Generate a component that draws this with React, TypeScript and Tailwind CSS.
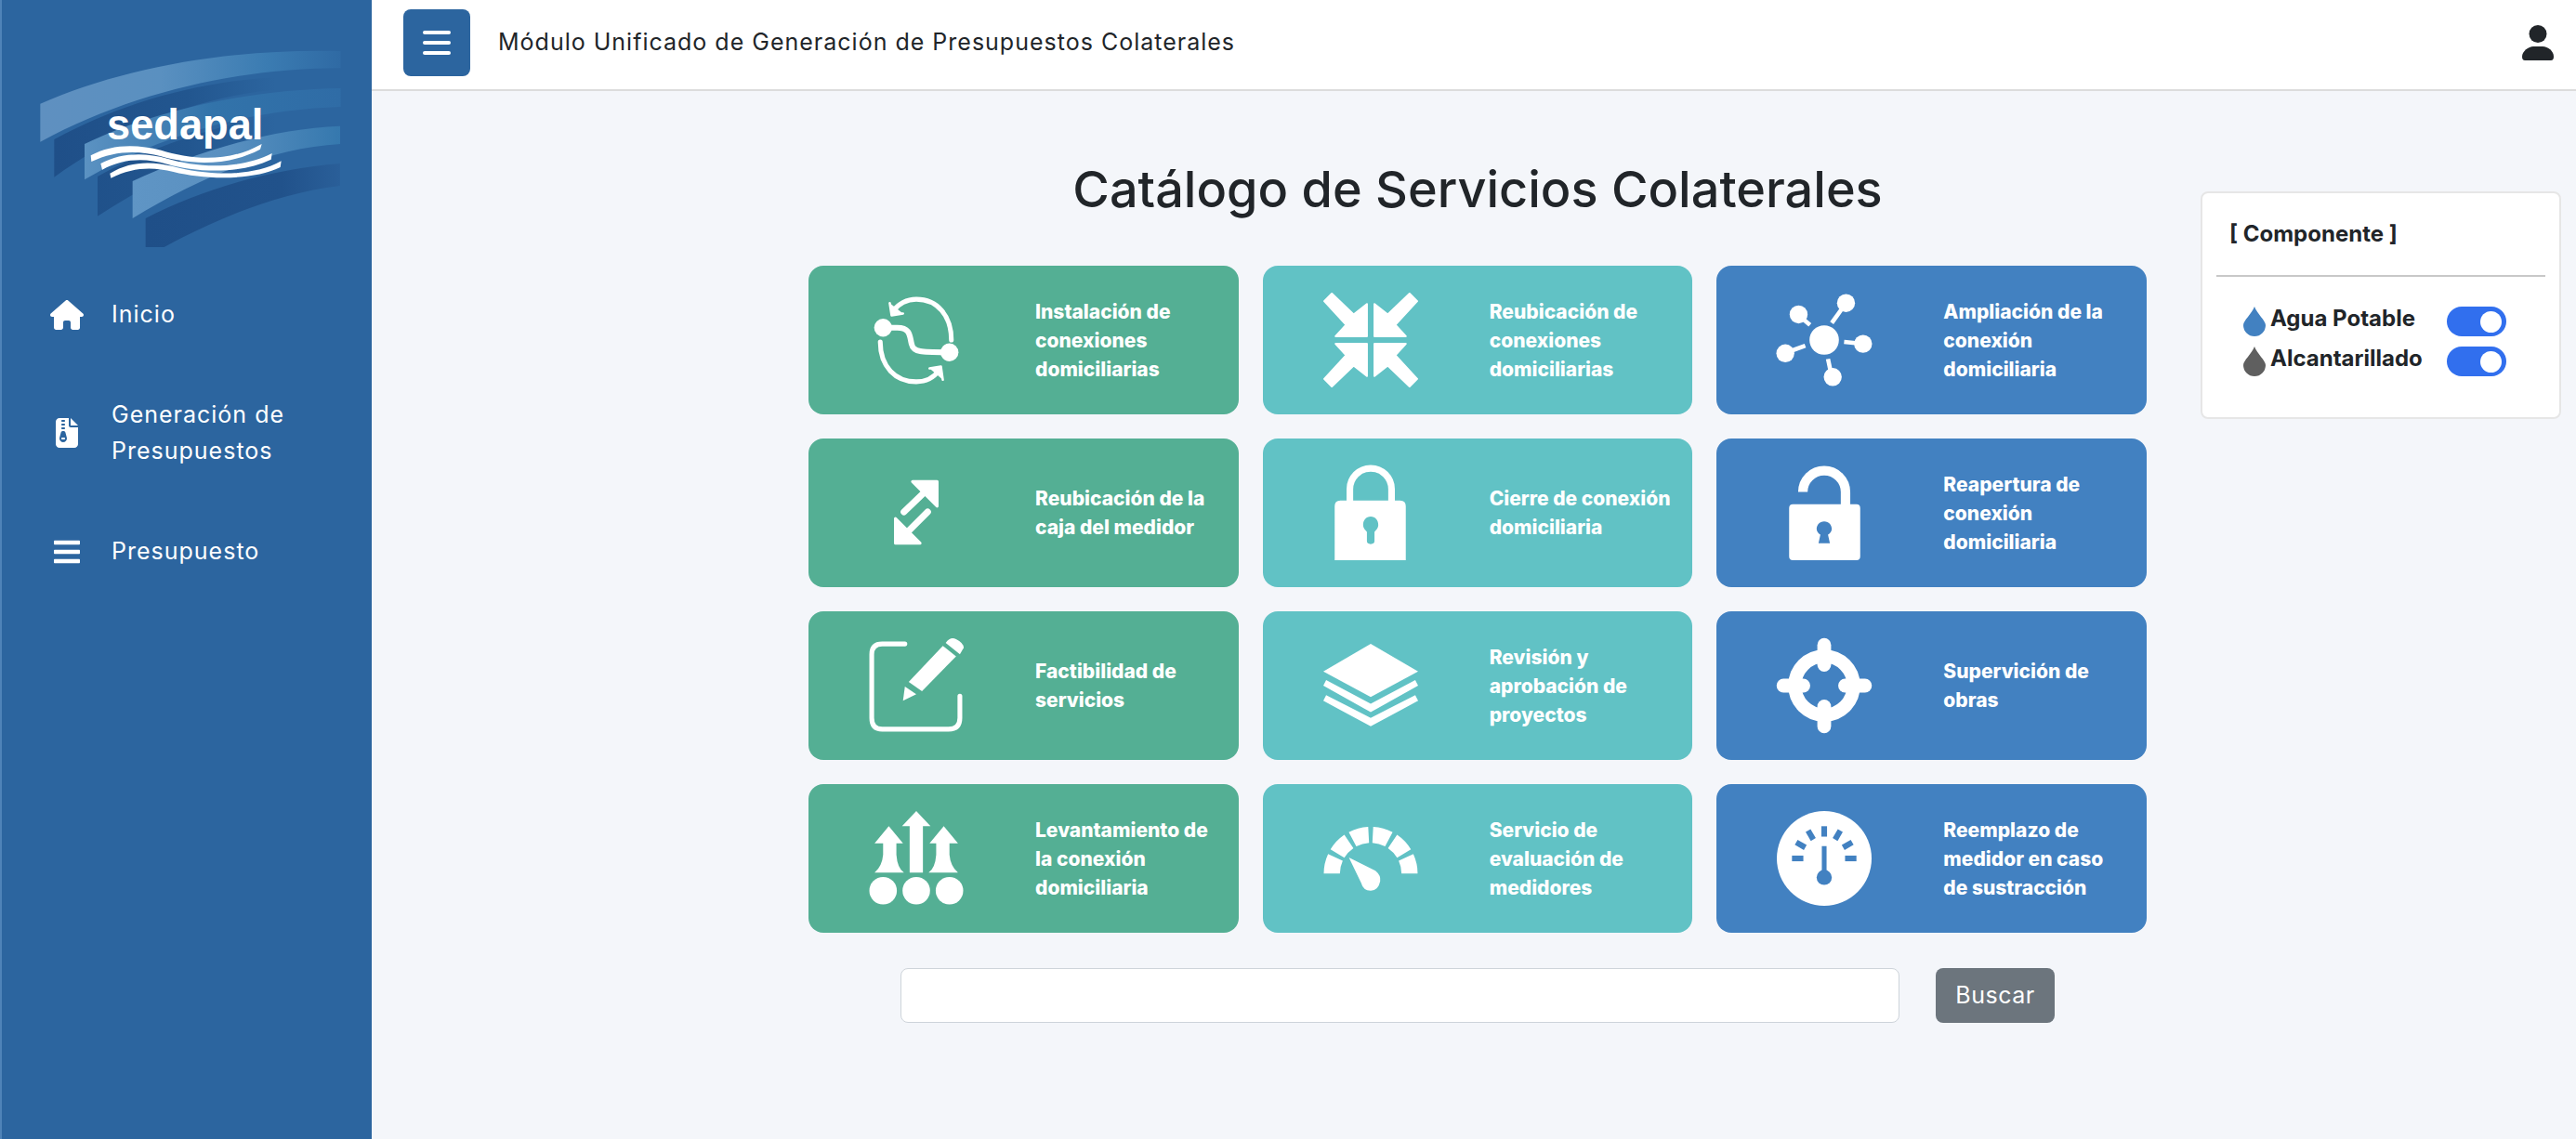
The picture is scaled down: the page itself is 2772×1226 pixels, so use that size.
import { FaBars } from "react-icons/fa";
import { FaFileZipper, FaHouse } from "react-icons/fa6";

const GREEN = "bg-[#54af94]";
const TEAL = "bg-[#61c2c5]";
const BLUE = "bg-[#4281c1]";

function Logo() {
  return (
    <svg viewBox="0 0 1050 705" className="ml-[28px] mt-[40px] block h-[235px] w-[350px]">
      <defs>
        <linearGradient id="lightBand" x1="40" y1="0" x2="1010" y2="0" gradientUnits="userSpaceOnUse">
          <stop offset="0" stopColor="#5f90c0" />
          <stop offset="0.4" stopColor="#5a90c0" />
          <stop offset="0.75" stopColor="#3b7cb2" />
          <stop offset="1" stopColor="#2f6aa4" />
        </linearGradient>
        <linearGradient id="lightBand2" x1="183" y1="0" x2="1010" y2="0" gradientUnits="userSpaceOnUse">
          <stop offset="0" stopColor="#5b92c2" />
          <stop offset="0.5" stopColor="#3273aa" />
          <stop offset="1" stopColor="#2f6ca6" />
        </linearGradient>
        <linearGradient id="lightBand3" x1="338" y1="0" x2="1010" y2="0" gradientUnits="userSpaceOnUse">
          <stop offset="0" stopColor="#5f95c5" />
          <stop offset="0.45" stopColor="#5a90c0" />
          <stop offset="1" stopColor="#3578ae" />
        </linearGradient>
        <linearGradient id="darkBand" x1="85" y1="0" x2="800" y2="0" gradientUnits="userSpaceOnUse">
          <stop offset="0" stopColor="#1f4f88" />
          <stop offset="0.6" stopColor="#22568f" />
          <stop offset="1" stopColor="#2c659f" />
        </linearGradient>
        <linearGradient id="darkBand2" x1="380" y1="0" x2="1010" y2="0" gradientUnits="userSpaceOnUse">
          <stop offset="0" stopColor="#1f4f88" />
          <stop offset="0.7" stopColor="#21528b" />
          <stop offset="1" stopColor="#2a5f99" />
        </linearGradient>
      </defs>
      <path d="M85 330 C300 215 560 130 900 125 L900 165 C560 170 300 300 85 452 Z" fill="url(#darkBand)" />
      <path d="M225 450 C420 340 700 250 1000 225 L1000 285 C700 300 440 440 225 578 Z" fill="url(#darkBand)" />
      <path d="M380 585 C560 490 790 425 1008 408 L1008 480 C800 505 600 590 440 678 L380 678 Z" fill="url(#darkBand2)" />
      <path d="M40 215 C300 100 650 35 1010 45 L1010 100 C700 100 350 170 40 338 Z" fill="url(#lightBand)" />
      <path d="M183 345 C400 240 700 170 1010 165 L1010 225 C700 235 420 320 183 460 Z" fill="url(#lightBand2)" />
      <path d="M338 465 C540 370 790 295 1008 287 L1008 345 C780 360 560 450 338 585 Z" fill="url(#lightBand3)" />
      <text x="255" y="330" fontFamily="'Liberation Sans', sans-serif" fontWeight="700" fontSize="136" fill="#fff" textLength="505" lengthAdjust="spacingAndGlyphs">
        sedapal
      </text>
      <g fill="#fff">
        <path d="M203 382 C270 345 350 345 430 365 C520 392 640 410 755 345 L750 362 C640 420 520 410 430 385 C360 365 280 365 205 402 Z" />
        <path d="M235 408 C300 372 380 372 450 392 C540 420 680 430 788 375 L785 395 C680 445 540 435 450 410 C380 390 310 390 240 428 Z" />
        <path d="M265 440 C330 400 400 400 470 418 C570 445 720 455 818 400 L815 420 C720 465 570 460 470 435 C400 418 340 420 268 455 Z" />
      </g>
    </svg>
  );
}

function Icon({ children }: { children: React.ReactNode }) {
  return (
    <svg viewBox="0 0 100 100" className="h-[102px] w-[102px] shrink-0 overflow-visible" fill="#fff">
      {children}
    </svg>
  );
}

const icons: Record<string, React.ReactNode> = {
  sync: (
    <g fill="none" stroke="#fff" strokeWidth="5" strokeLinecap="round">
      <path d="M87 50 C87 24 72 7 50 7 C40 7 31 12 26 19" />
      <path d="M22 11 L24 24 L36 22" fill="#fff" strokeWidth="2.5" strokeLinejoin="round" />
      <path d="M12 52 C12 78 28 94 50 94 C61 94 69 89 74 82" />
      <path d="M78 92 L76 78 L64 80" fill="#fff" strokeWidth="2.5" strokeLinejoin="round" />
      <path d="M15 37 H30 C44 37 43 46 45 54 C47 63 54 63 85 63" strokeWidth="6" />
      <circle cx="15" cy="37" r="9.5" fill="#fff" stroke="none" />
      <circle cx="85" cy="63" r="9.5" fill="#fff" stroke="none" />
    </g>
  ),
  compress: (
    <g strokeLinejoin="round" stroke="#fff" strokeWidth="2">
      <polygon id="arrowTL" points="1,9 9,1 32,23 46,12 46,46 13,46 24,34" />
      <use href="#arrowTL" transform="matrix(-1 0 0 1 100 0)" />
      <use href="#arrowTL" transform="matrix(1 0 0 -1 0 100)" />
      <use href="#arrowTL" transform="matrix(-1 0 0 -1 100 100)" />
    </g>
  ),
  network: (
    <g stroke="#fff">
      <g strokeWidth="4.5">
        <line x1="58" y1="32" x2="73" y2="11" />
        <line x1="35" y1="34" x2="22" y2="23" />
        <line x1="30" y1="56" x2="8" y2="64" />
        <line x1="71" y1="52" x2="90" y2="54" />
        <line x1="54" y1="70" x2="58" y2="89" />
      </g>
      <circle cx="50" cy="50" r="15.5" stroke="none" />
      <circle cx="73" cy="11" r="9.5" stroke="none" />
      <circle cx="23" cy="23" r="9.5" stroke="none" />
      <circle cx="9" cy="64" r="9.5" stroke="none" />
      <circle cx="91" cy="54" r="9.5" stroke="none" />
      <circle cx="59" cy="89" r="9.5" stroke="none" />
    </g>
  ),
  move: (
    <g stroke="#fff" strokeLinecap="round" strokeLinejoin="round">
      <path d="M46 17 H72 V43 Z" strokeWidth="3" />
      <line x1="37" y1="49" x2="61" y2="26" strokeWidth="7" />
      <path d="M28 56 V82 H54 Z" strokeWidth="3" />
      <line x1="62" y1="49" x2="38" y2="73" strokeWidth="7" />
    </g>
  ),
  lock: (
    <>
      <path d="M28 40 V25 A22 22 0 0 1 72 25 V40" fill="none" stroke="#fff" strokeWidth="7" />
      <path fillRule="evenodd" d="M18 37 H81 Q87 37 87 43 V100 H12 V43 Q12 37 18 37 Z M50 54 C45 54 42 58 42 63 C42 66 44 68 46 70 V80 Q46 83 50 83 Q54 83 54 80 V70 C56 68 58 66 58 63 C58 58 55 54 50 54 Z" />
    </>
  ),
  unlock: (
    <>
      <path d="M27.5 28 A22.5 22.5 0 0 1 72.5 28 V44" fill="none" stroke="#fff" strokeWidth="10" />
      <path fillRule="evenodd" d="M17 41 H84 Q88 41 88 45 V96 Q88 100 84 100 H17 Q13 100 13 96 V45 Q13 41 17 41 Z M50 59 C45 59 42 63 42 67 C42 70 44 72 46 73 L44 82 H56 L54 73 C56 72 58 70 58 67 C58 63 55 59 50 59 Z" />
    </>
  ),
  edit: (
    <>
      <path d="M38 6 H14 Q3 6 3 17 V84 Q3 96 14 96 H84 Q96 96 96 84 V61" fill="none" stroke="#fff" strokeWidth="5" strokeLinecap="round" />
      <polygon points="36,66 38,51 50,59" />
      <polygon points="42,46 56,56 92,19 78,8" />
      <path d="M81 5 Q86 -2 92 1 Q100 5 100 10 L96 17 Z" />
    </>
  ),
  layers: (
    <>
      <polygon points="50,6 100,35 50,62 0,35" />
      <polygon points="3,44 50,69 97,44 100,50 50,78 0,50" />
      <polygon points="3,60 50,84 97,60 100,66 50,93 0,66" />
    </>
  ),
  target: (
    <g fill="none" stroke="#fff">
      <circle cx="50" cy="50" r="31" strokeWidth="14" />
      <g strokeWidth="14.5" strokeLinecap="round">
        <line x1="50" y1="7" x2="50" y2="28" />
        <line x1="50" y1="93" x2="50" y2="72" />
        <line x1="7" y1="50" x2="28" y2="50" />
        <line x1="93" y1="50" x2="72" y2="50" />
      </g>
    </g>
  ),
  raise: (
    <>
      <polygon points="50,0 65,16 57,16 57,65 43,65 43,16 35,16" />
      <path id="sideArrow" d="M21 16 L36 34 L29 34 L29 46 Q30 60 37 65 H6 Q14 58 15 46 L15 34 L6 34 Z" />
      <use href="#sideArrow" transform="matrix(-1 0 0 1 100 0)" />
      <circle cx="15" cy="84" r="14.5" />
      <circle cx="50" cy="84" r="14.5" />
      <circle cx="85" cy="84" r="14.5" />
    </>
  ),
  speed: (
    <>
      <path d="M9 66 A41 41 0 0 1 91 66" fill="none" stroke="#fff" strokeWidth="17" pathLength={100} strokeDasharray="13.75 3.5" />
      <path d="M27 49 L55 63 Q61 68 60 74 Q58 84 50 84 Q42 84 40 76 Z" />
    </>
  ),
  gauge: (
    <>
      <circle cx="50" cy="50" r="50" />
      <g stroke="#4281c1" strokeWidth="6">
        <line x1="50" y1="16" x2="50" y2="27" />
        <line x1="33" y1="20.5" x2="38.5" y2="30" />
        <line x1="20.5" y1="33" x2="30" y2="38.5" />
        <line x1="16" y1="50" x2="28" y2="50" />
        <line x1="67" y1="20.5" x2="61.5" y2="30" />
        <line x1="79.5" y1="33" x2="70" y2="38.5" />
        <line x1="84" y1="50" x2="72" y2="50" />
        <line x1="50" y1="37" x2="50" y2="66" strokeWidth="5" />
      </g>
      <circle cx="50" cy="70" r="8" fill="#4281c1" />
    </>
  ),
};

const services = [
  { text: "Instalación de\nconexiones\ndomiciliarias", color: GREEN, icon: "sync" },
  { text: "Reubicación de\nconexiones\ndomiciliarias", color: TEAL, icon: "compress" },
  { text: "Ampliación de la\nconexión\ndomiciliaria", color: BLUE, icon: "network" },
  { text: "Reubicación de la\ncaja del medidor", color: GREEN, icon: "move" },
  { text: "Cierre de conexión\ndomiciliaria", color: TEAL, icon: "lock" },
  { text: "Reapertura de\nconexión\ndomiciliaria", color: BLUE, icon: "unlock" },
  { text: "Factibilidad de\nservicios", color: GREEN, icon: "edit" },
  { text: "Revisión y\naprobación de\nproyectos", color: TEAL, icon: "layers" },
  { text: "Supervición de\nobras", color: BLUE, icon: "target" },
  { text: "Levantamiento de\nla conexión\ndomiciliaria", color: GREEN, icon: "raise" },
  { text: "Servicio de\nevaluación de\nmedidores", color: TEAL, icon: "speed" },
  { text: "Reemplazo de\nmedidor en caso\nde sustracción", color: BLUE, icon: "gauge" },
];

function Drop({ color }: { color: string }) {
  return (
    <svg viewBox="0 0 24 32" className="h-[32px] w-[24px] shrink-0">
      <path d="M12 0 C9 8 0 15 0 20 A12 12 0 0 0 24 20 C24 15 15 8 12 0 Z" fill={color} />
    </svg>
  );
}

function Toggle() {
  return (
    <span className="flex h-[32px] w-[64px] shrink-0 items-center justify-end rounded-full bg-[#316fee] pr-[5px]">
      <span className="h-[23px] w-[23px] rounded-full bg-white" />
    </span>
  );
}

export default function App() {
  return (
    <div className="flex h-screen overflow-hidden bg-[#f4f6fa] text-[#212529] font-['Inter','Noto_Sans',sans-serif]">
      <aside className="w-[400px] shrink-0 border-l-2 border-[#4f83b8] bg-[#2c659f] text-white">
        <Logo />
        <nav className="mt-[44px] flex flex-col gap-[69px] text-[25px] leading-[39px] tracking-[1px]">
          <div className="flex items-center">
            <span className="ml-[52px] flex w-[36px] justify-center"><FaHouse className="h-[32px] w-[36px]" /></span>
            <span className="ml-[30px]">Inicio</span>
          </div>
          <div className="flex items-center">
            <span className="ml-[52px] flex w-[36px] justify-center"><FaFileZipper className="h-[32px] w-[24px]" /></span>
            <span className="ml-[30px]">Generación de<br />Presupuestos</span>
          </div>
          <div className="flex items-center">
            <span className="ml-[52px] flex w-[36px] justify-center"><FaBars className="h-[32px] w-[28px]" /></span>
            <span className="ml-[30px]">Presupuesto</span>
          </div>
        </nav>
      </aside>

      <main className="flex min-w-0 flex-1 flex-col">
        <header className="flex h-[98px] shrink-0 items-center border-b-2 border-[#dcdcdc] bg-white pb-[4px] pl-[34px] pr-[24px]">
          <button className="flex h-[72px] w-[72px] flex-col items-center justify-center gap-[7px] rounded-[8px] bg-[#2c659f]">
            <span className="h-[4px] w-[30px] rounded bg-white" />
            <span className="h-[4px] w-[30px] rounded bg-white" />
            <span className="h-[4px] w-[30px] rounded bg-white" />
          </button>
          <span className="ml-[30px] text-[25px] tracking-[1px]">Módulo Unificado de Generación de Presupuestos Colaterales</span>
          <svg viewBox="0 0 34 39" className="ml-auto h-[39px] w-[34px]" fill="#212529">
            <circle cx="17" cy="9.5" r="9.5" />
            <path d="M3 38 Q0 38 0 34 C0 28 7 23 12 23 H22 C28 23 34 28 34 34 Q34 38 31 38 Z" />
          </svg>
        </header>

        <div className="flex flex-1 items-start pl-[470px]">
          <section className="w-[1440px] shrink-0 pt-[72px]">
            <h1 className="text-center text-[54px] font-medium leading-[67px]">Catálogo de Servicios Colaterales</h1>
            <div className="mt-[49px] grid grid-cols-3 gap-x-[26px] gap-y-[26px]">
              {services.map((service) => (
                <div key={service.text} className={`flex h-[160px] items-center rounded-[16px] pl-[65px] text-white ${service.color}`}>
                  <Icon>{icons[service.icon]}</Icon>
                  <p className="ml-[77px] whitespace-pre-line text-[21px] font-extrabold leading-[31px]">{service.text}</p>
                </div>
              ))}
            </div>
            <div className="ml-[99px] mt-[38px] flex gap-[39px]">
              <input className="h-[59px] w-[1075px] rounded-[8px] border border-[#ced4da] bg-white" />
              <button className="h-[59px] w-[128px] rounded-[8px] bg-[#6c757d] text-[25px] tracking-[0.5px] text-white">Buscar</button>
            </div>
          </section>

          <section className="ml-[58px] mt-[108px] h-[245px] w-[388px] shrink-0 rounded-[8px] border-2 border-[#e6e6e6] bg-white px-[15px] pt-[26px]">
            <h2 className="pl-[14px] text-[24px] font-bold leading-[36px]">[ Componente ]</h2>
            <hr className="mt-[26px] border-t-2 border-[#c8c8c8]" />
            <div className="mt-[32px] flex flex-col gap-[11px] pl-[29px] text-[24px] font-bold">
              <div className="flex h-[32px] items-center">
                <Drop color="#4281c1" />
                <span className="ml-[5px] w-[190px] pb-[6px] leading-[26px]">Agua Potable</span>
                <Toggle />
              </div>
              <div className="flex h-[32px] items-center">
                <Drop color="#5f5f5f" />
                <span className="ml-[5px] w-[190px] pb-[6px] leading-[26px]">Alcantarillado</span>
                <Toggle />
              </div>
            </div>
          </section>
        </div>
      </main>
    </div>
  );
}
